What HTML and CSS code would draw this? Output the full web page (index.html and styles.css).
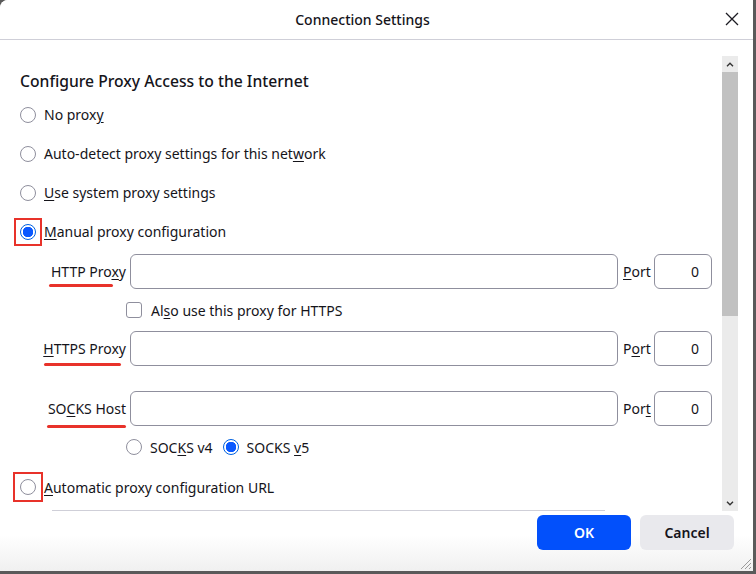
FILE: index.html
```html
<!DOCTYPE html>
<html lang="en">
<head>
  <meta charset="UTF-8" />
  <title>Connection Settings</title>
  <link rel="stylesheet" href="styles.css">
</head>
<body>
  <div class="dialog">
    <div class="titlebar">
      <span class="title">Connection Settings</span>
      <button class="close" aria-label="Close">
        <svg width="14" height="14" viewBox="0 0 14 14"><path d="M1 1 L13 13 M13 1 L1 13" stroke="#1c1b22" stroke-width="1.3" fill="none"/></svg>
      </button>
    </div>

    <div class="body">
      <div class="content">
        <h2 class="heading">Configure Proxy Access to the Internet</h2>

        <div class="radio-row"><span class="radio"></span><span>No prox<u>y</u></span></div>
        <div class="radio-row"><span class="radio"></span><span>Auto-detect proxy settings for this net<u>w</u>ork</span></div>
        <div class="radio-row"><span class="radio"></span><span><u>U</u>se system proxy settings</span></div>
        <div class="radio-row"><span class="mark"><span class="radio checked"></span></span><span><u>M</u>anual proxy configuration</span></div>

        <div class="fields">
          <label class="field-label red-line line-http">HTTP Pro<u>x</u>y</label>
          <div class="input"></div>
          <label class="port-label"><u>P</u>ort</label>
          <div class="input port">0</div>

          <div></div>
          <div class="check-row"><span class="checkbox"></span><span>Al<u>s</u>o use this proxy for HTTPS</span></div>
          <div></div>
          <div></div>

          <label class="field-label red-line line-https"><u>H</u>TTPS Proxy</label>
          <div class="input"></div>
          <label class="port-label">P<u>o</u>rt</label>
          <div class="input port">0</div>

          <div class="spacer"></div>
          <div class="spacer"></div>
          <div class="spacer"></div>
          <div class="spacer"></div>

          <label class="field-label red-line line-socks">SO<u>C</u>KS Host</label>
          <div class="input"></div>
          <label class="port-label">Por<u>t</u></label>
          <div class="input port">0</div>

          <div></div>
          <div class="socks-row">
            <span class="radio"></span><span class="socks-v4">SOC<u>K</u>S v4</span>
            <span class="radio checked"></span><span>SOCKS <u>v</u>5</span>
          </div>
          <div></div>
          <div></div>
        </div>

        <div class="radio-row auto-row"><span class="mark"><span class="radio"></span></span><span><u>A</u>utomatic proxy configuration URL</span></div>
        <div class="url-input"></div>
      </div>

      <div class="scrollbar">
        <div class="arrow">
          <svg width="8" height="5" viewBox="0 0 8 5"><path d="M1 4.2 L4 1.2 L7 4.2" stroke="#333" stroke-width="1.4" fill="none"/></svg>
        </div>
        <div class="thumb"></div>
        <div class="track"></div>
        <div class="arrow">
          <svg width="8" height="5" viewBox="0 0 8 5"><path d="M1 0.8 L4 3.8 L7 0.8" stroke="#333" stroke-width="1.4" fill="none"/></svg>
        </div>
      </div>
    </div>

    <div class="footer">
      <button class="btn primary">OK</button>
      <button class="btn">Cancel</button>
      <svg class="grip" width="14" height="14" viewBox="0 0 14 14"><path d="M13 3 L3 13 M13 7 L7 13 M13 11 L11 13" stroke="#9a9a9a" stroke-width="1" fill="none"/></svg>
    </div>
  </div>
</body>
</html>
```

FILE: styles.css
```css
* {
  box-sizing: border-box;
}

body {
  margin: 0;
  background: #5a5a5a;
  font-family: "Segoe UI", "Noto Sans", sans-serif;
  font-size: 14px;
  color: #15141a;
  width: 756px;
  height: 574px;
  overflow: hidden;
}

u {
  text-decoration-thickness: 1px;
  text-underline-offset: 2px;
}

.dialog {
  width: 753px;
  height: 571px;
  background: linear-gradient(to bottom, #fff 0, #fff 535px, #f0f0f0 571px);
  border-top-left-radius: 8px;
  display: flex;
  flex-direction: column;
}

.titlebar {
  height: 40px;
  border-bottom: 1px solid #cfcfd8;
  display: flex;
  align-items: center;
  justify-content: center;
  padding-right: 28px;
  position: relative;
  background: #fff;
  border-top-left-radius: 8px;
}

.title {
  font-weight: 500;
  font-size: 14px;
}

.close {
  position: absolute;
  right: 14px;
  top: 12px;
  border: none;
  background: none;
  padding: 0;
  width: 14px;
  height: 14px;
}

.body {
  height: 471px;
  display: flex;
  background: #fff;
}

.content {
  flex: 1;
  overflow: hidden;
  padding-left: 20px;
}

.heading {
  font-size: 15.7px;
  font-weight: 500;
  margin: 30px 0 3px;
  line-height: 22px;
}

.radio-row {
  display: flex;
  align-items: center;
  height: 39px;
  gap: 8px;
}

.radio {
  width: 16px;
  height: 16px;
  border: 1px solid #8f8f9d;
  border-radius: 50%;
  display: inline-block;
  flex: none;
  background: #fff;
}

.radio.checked {
  border: 1.5px solid #0061e0;
  background: radial-gradient(circle, #0a58ff 0, #0a58ff 5px, #fff 5.5px);
}

.mark {
  display: flex;
  outline: 2.5px solid #e8322a;
  outline-offset: 4px;
}

.auto-row .mark {
  outline-offset: 5px;
}

.fields {
  display: grid;
  grid-template-columns: 106px 488px 28px 58px;
  column-gap: 4px;
  align-items: center;
  margin-top: 3px;
}

.field-label {
  text-align: right;
  position: relative;
}

.input {
  height: 35px;
  border: 1px solid #8f8f9d;
  border-radius: 6px;
  background: #fff;
}

.port {
  text-align: right;
  padding-right: 12px;
  line-height: 33px;
}

.port-label {
  padding-left: 1px;
}

.check-row {
  display: flex;
  align-items: center;
  gap: 9px;
  height: 42px;
  margin-left: -4px;
}

.checkbox {
  width: 16px;
  height: 16px;
  border: 1px solid #8f8f9d;
  border-radius: 3px;
  display: inline-block;
}

.spacer {
  height: 25px;
}

.socks-row {
  display: flex;
  align-items: center;
  height: 42px;
  margin-left: -4px;
  gap: 8px;
}

.socks-v4 {
  margin-right: 2px;
}

.red-line::after {
  content: "";
  position: absolute;
  height: 3px;
  background: #e8322a;
  border-radius: 2px;
}

.line-http::after {
  left: 29px;
  width: 64px;
  bottom: -6px;
}

.line-https::after {
  left: 24px;
  width: 77px;
  bottom: -8px;
}

.line-socks::after {
  left: 27px;
  width: 79px;
  bottom: -10px;
}

.auto-row {
  height: 38px;
}

.url-input {
  margin: 4px 0 0 32px;
  height: 34px;
  width: 553px;
  border-top: 1px solid #cfcfd8;
}

.scrollbar {
  width: 16px;
  margin: 16px 15px 0 0;
  display: flex;
  flex-direction: column;
  background: #ebebeb;
}

.arrow {
  height: 16px;
  display: flex;
  align-items: center;
  justify-content: center;
}

.thumb {
  height: 244px;
  background: #c1c1c1;
}

.track {
  flex: 1;
}

.footer {
  flex: 1;
  display: flex;
  justify-content: flex-end;
  align-items: flex-start;
  padding: 4px 19px 0 0;
  gap: 9px;
  position: relative;
}

.btn {
  width: 94px;
  height: 35px;
  border: none;
  border-radius: 6px;
  background: #e9e9ed;
  font-family: inherit;
  font-size: 14px;
  font-weight: 600;
  color: #15141a;
}

.btn.primary {
  background: #0250fb;
  color: #fff;
}

.grip {
  position: absolute;
  right: 1px;
  bottom: 1px;
}
```
